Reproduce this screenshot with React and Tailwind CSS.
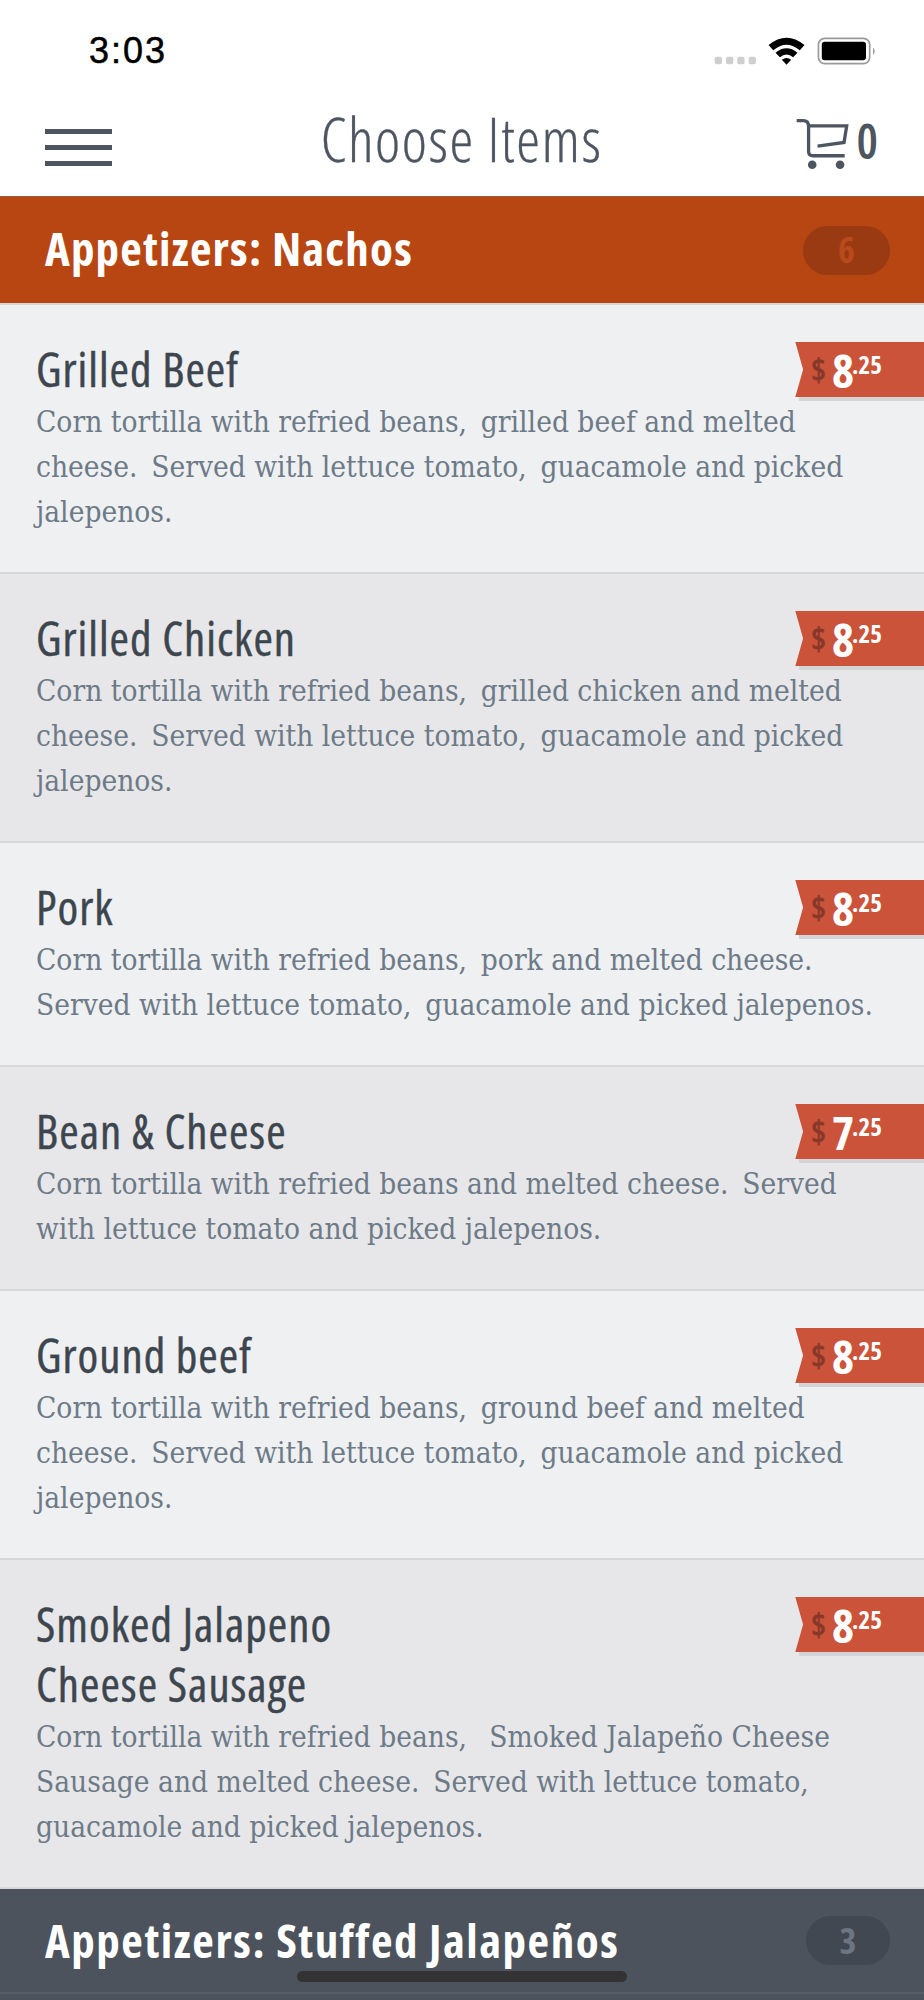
const COND = "font-['Open_Sans',sans-serif] [font-stretch:75%]";

const S = " \u2009";
const items = [
  { title: ["Grilled Beef"], price: "8", lines: [`Corn tortilla with refried beans,${S}grilled beef and melted`, `cheese.${S}Served with lettuce tomato,${S}guacamole and picked`, "jalepenos."] },
  { title: ["Grilled Chicken"], price: "8", alt: true, lines: [`Corn tortilla with refried beans,${S}grilled chicken and melted`, `cheese.${S}Served with lettuce tomato,${S}guacamole and picked`, "jalepenos."] },
  { title: ["Pork"], price: "8", lines: [`Corn tortilla with refried beans,${S}pork and melted cheese.`, `Served with lettuce tomato,${S}guacamole and picked jalepenos.`] },
  { title: ["Bean & Cheese"], price: "7", alt: true, lines: [`Corn tortilla with refried beans and melted cheese.${S}Served`, "with lettuce tomato and picked jalepenos."] },
  { title: ["Ground beef"], price: "8", lines: [`Corn tortilla with refried beans,${S}ground beef and melted`, `cheese.${S}Served with lettuce tomato,${S}guacamole and picked`, "jalepenos."] },
  { title: ["Smoked Jalapeno", "Cheese Sausage"], price: "8", alt: true, lines: [`Corn tortilla with refried beans,${S} Smoked Jalapeño Cheese`, `Sausage and melted cheese.${S}Served with lettuce tomato,`, "guacamole and picked jalepenos."] },
];

function StatusIcons() {
  return (
    <svg width="163" height="28" viewBox="100 48 490 84" className="mt-[7px] block">
      <rect x="102" y="107" width="22" height="23" rx="6" fill="#cfcfcf" />
      <rect x="136" y="107" width="22" height="23" rx="6" fill="#cfcfcf" />
      <rect x="170" y="107" width="22" height="23" rx="6" fill="#cfcfcf" />
      <rect x="204" y="107" width="22" height="23" rx="6" fill="#cfcfcf" />
      <path d="M264 72 Q318 28 372 72 L358 88 Q318 54 278 88 Z" fill="#000" />
      <path d="M285 95 Q318 68 351 95 L338 109 Q318 92 298 109 Z" fill="#000" />
      <path d="M304 116 Q318 106 332 116 L318 131 Z" fill="#000" />
      <rect x="414" y="52" width="154" height="76" rx="19" fill="none" stroke="#999" strokeWidth="5" />
      <rect x="424" y="62" width="133" height="56" rx="9" fill="#000" />
      <path d="M578 80 Q588 91 578 102 Z" fill="#999" />
    </svg>
  );
}

function Cart() {
  return (
    <svg width="57" height="53" viewBox="345 295 170 160" className="-mt-[5px] block" fill="none" stroke="#4d5560" strokeWidth="10">
      <path d="M352 303 H372 Q388 303 388 320 V396 Q388 409 402 409 H497" />
      <path d="M388 319 H503 L495 369 L415 380" />
      <circle cx="399" cy="436" r="13" fill="#4d5560" stroke="none" />
      <circle cx="483" cy="436" r="13" fill="#4d5560" stroke="none" />
    </svg>
  );
}

function SectionHeader({ label, count, bg, badge, countColor, extra, labelClass }) {
  return (
    <div className={`flex items-center justify-between pl-[45px] pr-[34px] ${bg} ${extra}`}>
      <span className={`${COND} text-[47px] font-bold text-white leading-none whitespace-nowrap ${labelClass}`}>{label}</span>
      <span className={`flex h-[49px] items-center justify-center rounded-[25px] ${badge} ${countColor} ${COND} text-[36px] font-bold`}>{count}</span>
    </div>
  );
}

function PriceTag({ price }) {
  return (
    <div className="absolute right-0 top-[37px] h-[59px] w-[130px]">
      <div className="absolute bottom-0 left-[5px] right-0 h-[6px] bg-[#d3d4d6]" />
      <div className={`absolute left-0 top-0 flex h-[55px] w-[130px] bg-[#cb5339] pl-[17px] [clip-path:polygon(1%_0,100%_0,100%_100%,1%_100%,7%_50%)] ${COND} font-bold`}>
        <span className="mt-[12px] text-[32px] leading-[32px] text-[#87382a]">$</span>
        <span className="ml-[6px] mt-[5px] text-[47px] leading-[47px] text-white">{price}</span>
        <span className="-ml-[2px] mt-[9px] text-[25px] leading-[26px] text-white">.25</span>
      </div>
    </div>
  );
}

function Row({ item }) {
  return (
    <div className={`relative border-b-2 border-[#d6d7d9] pt-[34px] pb-[37px] pl-[36px] ${item.alt ? "bg-[#e7e7e9]" : "bg-[#eff0f2]"}`}>
      <PriceTag price={item.price} />
      <div className={`${COND} mb-[1px] text-[47px] font-medium leading-[60px] tracking-[1px] text-[#3d464e] [-webkit-text-stroke:0.4px_#3d464e]`}>
        {item.title.map((t) => <div key={t}>{t}</div>)}
      </div>
      <div className="font-['DejaVu_Serif',serif] [font-stretch:condensed] text-[29.6px] leading-[45px] text-[#6d7a87] whitespace-pre">
        {item.lines.map((l) => <div key={l}>{l}</div>)}
      </div>
    </div>
  );
}

export default function App() {
  return (
    <div className="relative h-[2000px] w-[924px] overflow-hidden bg-white">
      <div className="flex h-[98px] items-start justify-between pl-[89px] pr-[47px] pt-[30px]">
        <span className="font-['Liberation_Sans',sans-serif] text-[36px] font-medium leading-[42px] tracking-[2px] text-black [-webkit-text-stroke:0.5px_#000]">3:03</span>
        <StatusIcons />
      </div>
      <div className="grid h-[99px] grid-cols-[1fr_auto_1fr] items-center border-b border-[#9c5a3c] pl-[45px] pr-[46px]">
        <div className="flex w-[67px] flex-col gap-[11px]">
          <div className="h-[5px] bg-[#4d5560]" />
          <div className="h-[5px] bg-[#4d5560]" />
          <div className="h-[5px] bg-[#4d5560]" />
        </div>
        <span className={`${COND} -mt-[16px] text-[60px] font-light leading-none tracking-[1.6px] text-[#4d5560] [-webkit-text-stroke:0.3px_#4d5560]`}>Choose Items</span>
        <div className="flex items-center justify-end gap-[6px]">
          <Cart />
          <span className={`${COND} -mt-[12px] text-[48px] font-semibold leading-none text-[#4d5560]`}>0</span>
        </div>
      </div>
      <SectionHeader label="Appetizers: Nachos" labelClass="-mt-[3px] tracking-[1.2px]" count={<span className="flex h-full w-[87px] items-center justify-center">6</span>} bg="bg-[#b84613]" badge="bg-[#9a3a12]" countColor="text-[#b84a1c]" extra="h-[108px] border-b-2 border-[#d6d7d9]" />
      {items.map((item) => <Row key={item.title[0]} item={item} />)}
      <SectionHeader label="Appetizers: Stuffed Jalapeños" labelClass="tracking-[1.55px]" count={<span className="flex h-full w-[84px] items-center justify-center">3</span>} bg="bg-[#4c535d]" badge="bg-[#414851]" countColor="text-[#6c7681]" extra="h-[105px] border-b-2 border-[#575e68]" />
      <div className="h-[10px] bg-[#4c535d]" />
      <div className="absolute bottom-[18px] left-[297px] h-[11px] w-[330px] rounded-full bg-[#333333]" />
    </div>
  );
}
